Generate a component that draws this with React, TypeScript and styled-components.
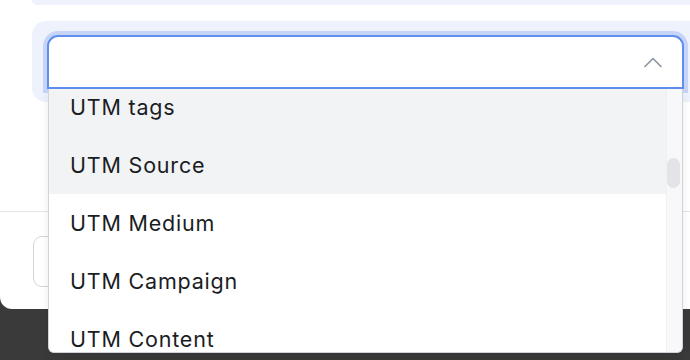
import React, { FC, useLayoutEffect, useRef } from "react";
import styled, { createGlobalStyle } from "styled-components";

const GlobalStyle = createGlobalStyle`
  html, body {
    margin: 0;
    padding: 0;
    background: #3a3a3a;
    font-family: Inter, "Noto Sans", "Liberation Sans", sans-serif;
    overflow: hidden;
  }
`;

const fields = [
  "Page URL",
  "Page title",
  "Referrer",
  "Landing page",
  "Browser",
  "Device type",
  "Operating system",
  "Country",
  "City",
  "Language",
  "UTM tags",
  "UTM Source",
  "UTM Medium",
  "UTM Campaign",
  "UTM Content",
  "UTM Term",
  "Custom field 1",
  "Custom field 2",
  "Custom field 3",
  "Custom field 4",
  "Custom field 5",
  "Custom field 6",
  "Custom field 7",
  "Custom field 8",
  "Custom field 9",
  "Custom field 10",
  "Custom field 11",
  "Custom field 12",
  "Custom field 13",
  "Custom field 14",
  "Custom field 15",
  "Custom field 16",
  "Custom field 17",
  "Custom field 18",
  "Custom field 19",
  "Custom field 20",
  "Custom field 21",
  "Custom field 22",
  "Custom field 23",
];

const ChevronUp: FC = () => (
  <svg width="20" height="12" viewBox="0 0 20 12" fill="none">
    <path
      d="M2 10.5L10 2.5L18 10.5"
      stroke="#8a93a3"
      strokeWidth="1.6"
      strokeLinecap="round"
      strokeLinejoin="round"
    />
  </svg>
);

const App: FC = () => {
  const listRef = useRef<HTMLUListElement>(null);

  useLayoutEffect(() => {
    if (listRef.current) listRef.current.scrollTop = 591;
  }, []);

  return (
    <Page>
      <GlobalStyle />
      <Modal>
        <Body>
          <TopPanel />
          <FieldPanel>
            <SelectWrap>
              <SelectBox>
                <ChevronUp />
              </SelectBox>
              <Dropdown>
                <Options ref={listRef}>
                  {fields.map((f) => (
                    <Option key={f} active={f === "UTM tags" || f === "UTM Source"}>
                      {f}
                    </Option>
                  ))}
                </Options>
                <ScrollTrack>
                  <ScrollThumb />
                </ScrollTrack>
              </Dropdown>
            </SelectWrap>
          </FieldPanel>
        </Body>
        <Footer>
          <GhostButton type="button" aria-label="Cancel" />
        </Footer>
      </Modal>
    </Page>
  );
};

const Page = styled.div`
  width: 690px;
  height: 360px;
  overflow: hidden;
  position: relative;
`;

const Modal = styled.div`
  width: 720px;
  background: #fff;
  border-bottom-left-radius: 12px;
`;

const Body = styled.div`
  padding: 0 0 0 32px;
  height: 211px;
  box-sizing: border-box;
`;

const TopPanel = styled.div`
  height: 5px;
  background: #eff2fc;
  border-radius: 0 0 14px 14px;
`;

const FieldPanel = styled.div`
  margin-top: 16px;
  padding: 14px 22px 13px 15px;
  background: #eef2fd;
  border-radius: 14px;
`;

const SelectWrap = styled.div`
  position: relative;
  width: 637px;
`;

const SelectBox = styled.div`
  height: 54px;
  box-sizing: border-box;
  border: 2px solid #5e8ff0;
  border-radius: 11px 11px 0 0;
  background: #fff;
  box-shadow: 0 0 0 4px #c6d5f7;
  display: flex;
  align-items: center;
  justify-content: flex-end;
  padding-right: 19px;
`;

const Dropdown = styled.div`
  position: absolute;
  top: 54px;
  left: 1px;
  right: 1px;
  height: 264px;
  background: #fff;
  border: 1px solid #cfd3da;
  border-top: none;
  border-radius: 0 0 6px 6px;
  box-sizing: border-box;
  overflow: hidden;
  box-shadow: 0 4px 10px rgba(0, 0, 0, 0.08);
`;

const Options = styled.ul`
  height: 100%;
  margin: 0;
  padding: 0 16px 0 0;
  list-style: none;
  overflow-y: scroll;
  scrollbar-width: none;
  &::-webkit-scrollbar {
    display: none;
  }
`;

const ScrollTrack = styled.div`
  position: absolute;
  top: 0;
  right: 0;
  bottom: 0;
  width: 16px;
  background: #f8f8fa;
  border-left: 1px solid #f1f1f4;
  box-sizing: border-box;
`;

const ScrollThumb = styled.div`
  margin: 69px 2px 0 0;
  height: 30px;
  background: #e4e4e8;
  border-radius: 7px;
`;

const Option = styled.li<{ active?: boolean }>`
  height: 58px;
  display: flex;
  align-items: center;
  padding-left: 21px;
  font-size: 21.5px;
  letter-spacing: 0.8px;
  color: #1a1d24;
  background: ${(p) => (p.active ? "#f2f3f5" : "#fff")};
`;

const Footer = styled.div`
  border-top: 1px solid #e3e6eb;
  padding: 24px 0 22px 33px;
`;

const GhostButton = styled.button`
  display: block;
  height: 51px;
  width: 120px;
  background: #fff;
  border: 1px solid #d1d5db;
  border-radius: 9px;
`;

export default App;
